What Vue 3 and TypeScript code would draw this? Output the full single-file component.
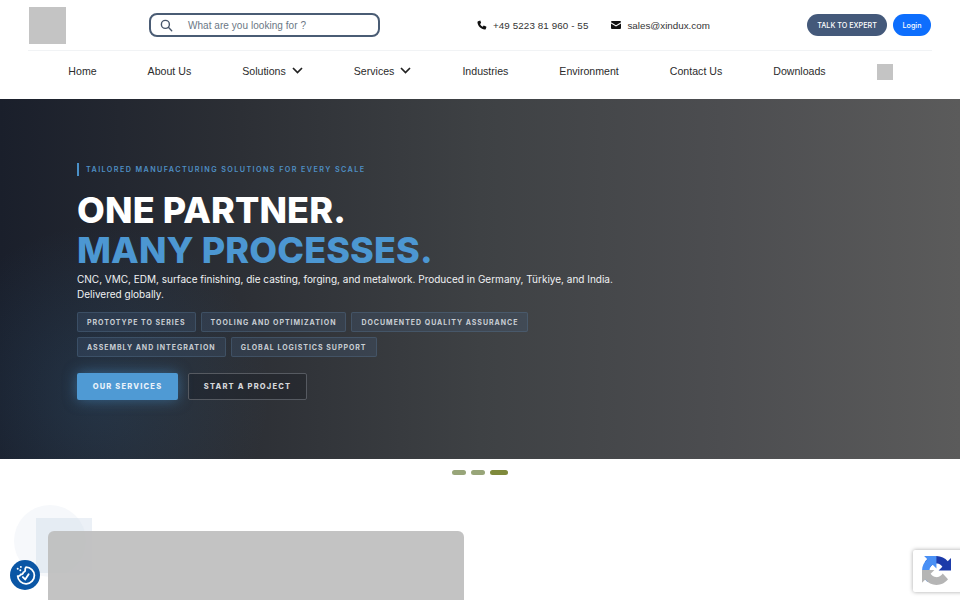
<script setup lang="ts">
interface NavItem { label: string; caret?: boolean }
const nav: NavItem[] = [
  { label: 'Home' },
  { label: 'About Us' },
  { label: 'Solutions', caret: true },
  { label: 'Services', caret: true },
  { label: 'Industries' },
  { label: 'Environment' },
  { label: 'Contact Us' },
  { label: 'Downloads' }
]
const tags: string[] = [
  'PROTOTYPE TO SERIES',
  'TOOLING AND OPTIMIZATION',
  'DOCUMENTED QUALITY ASSURANCE',
  'ASSEMBLY AND INTEGRATION',
  'GLOBAL LOGISTICS SUPPORT'
]
</script>

<template>
  <div class="page">
    <header class="header">
      <div class="top">
        <div class="logo"></div>
        <div class="search">
          <svg width="13" height="13" viewBox="0 0 14 14" fill="none" stroke="#475569" stroke-width="1.500" stroke-linecap="round">
            <circle cx="5.800" cy="5.800" r="4.300" />
            <path d="M9 9l3.600 3.600" />
          </svg>
          <span class="ph">What are you looking for ?</span>
        </div>
        <div class="contact phone">
          <svg width="10" height="10" viewBox="0 0 24 24" fill="#111">
            <path d="M6.600 1.500 2.400 3C1.600 3.400 1 4.300 1.100 5.300 2 14.500 9.500 22 18.700 22.900c1 .1 1.900-.5 2.300-1.300l1.500-4.200c.2-.7-.1-1.400-.7-1.700l-4.500-2.100c-.6-.3-1.300-.1-1.700.4l-1.700 2.100c-2.900-1.400-5.300-3.800-6.700-6.700l2.100-1.700c.5-.4.7-1.100.4-1.700L8.300 2.200c-.3-.6-1-.9-1.700-.7z" />
          </svg>
          <span>+49 5223 81 960 - 55</span>
        </div>
        <div class="contact mail">
          <svg width="10" height="8" viewBox="0 0 20 16" fill="#111">
            <path d="M2 0h16a2 2 0 0 1 2 2v.6l-10 6-10-6V2a2 2 0 0 1 2-2z" />
            <path d="M0 5l10 6 10-6v9a2 2 0 0 1-2 2H2a2 2 0 0 1-2-2z" />
          </svg>
          <span>sales@xindux.com</span>
        </div>
        <div class="actions">
          <button class="pill expert">TALK TO EXPERT</button>
          <button class="pill login">Login</button>
        </div>
      </div>
      <nav class="nav">
        <a v-for="item in nav" :key="item.label" class="nav-item">
          {{ item.label }}
          <svg v-if="item.caret" width="11" height="7" viewBox="0 0 11 7" fill="none" stroke="#222" stroke-width="1.700">
            <path d="M1 1l4.500 4.500L10 1" />
          </svg>
        </a>
        <div class="flag"></div>
      </nav>
    </header>

    <section class="hero">
      <div class="eyebrow">TAILORED MANUFACTURING SOLUTIONS FOR EVERY SCALE</div>
      <h1 class="title">ONE PARTNER.<br /><span class="accent">MANY PROCESSES.</span></h1>
      <p class="lead">CNC, VMC, EDM, surface finishing, die casting, forging, and metalwork. Produced in Germany, Türkiye, and India. Delivered globally.</p>
      <div class="tags">
        <span v-for="tag in tags" :key="tag" class="tag">{{ tag }}</span>
      </div>
      <div class="cta">
        <button class="btn primary">OUR SERVICES</button>
        <button class="btn ghost">START A PROJECT</button>
      </div>
    </section>

    <div class="dots">
      <span class="dot"></span>
      <span class="dot"></span>
      <span class="dot active"></span>
    </div>

    <section class="below">
      <div class="deco-circle"></div>
      <div class="deco-square"></div>
      <div class="image"></div>
    </section>

    <div class="cookie">
      <svg width="23" height="23" viewBox="0 0 22 22" fill="none" stroke="#fff" stroke-width="1.700" stroke-linecap="round" stroke-linejoin="round">
        <path d="M11.500 3a8 8 0 1 1-8 8.500c1.200.3 2.400-.3 2.800-1.500 1.400.2 2.500-.7 2.600-2 1.200-.3 2-1.400 1.800-2.500-.1-.9 0-1.800.8-2.500z" />
        <path d="M8.500 12.500l2.200 2.300 3.300-5" stroke-width="1.800" />
        <path d="M3.500 4.500h.1M6.500 2.800h.1M6 6h.1" stroke-width="1.800" />
      </svg>
    </div>

    <div class="recaptcha">
      <svg width="29" height="29" viewBox="0 0 64 64">
        <path d="M64 31.955l-.033-1.370V4.687l-7.160 7.160C50.948 4.674 42.033.093 32.050.093c-10.400 0-19.622 4.960-25.458 12.640l11.736 11.860c1.150-2.127 2.784-3.953 4.770-5.330 2.050-1.600 4.952-2.910 8.952-2.910.483 0 .856.057 1.130.163 4.956.39 9.252 3.125 11.782 7.090l-8.307 8.307c10.520-.04 22.400-.066 27.347.004" fill="#1c3aa9" />
        <path d="M31.965 0l-1.370.033H4.687l7.160 7.160C4.674 13.052.093 21.967.093 31.950c0 10.400 4.960 19.622 12.640 25.458l11.860-11.736c-2.127-1.150-3.953-2.784-5.330-4.770-1.600-2.050-2.910-4.952-2.910-8.952 0-.483.057-.856.163-1.130.39-4.956 3.125-9.252 7.090-11.782l8.307 8.307c-.04-10.520-.066-22.400.004-27.347" fill="#4a90f5" />
        <path d="M.002 31.965l.033 1.370v25.898l7.160-7.160c5.857 7.170 14.772 11.750 24.755 11.750 10.400 0 19.622-4.960 25.458-12.640L45.670 38.450c-1.150 2.127-2.784 3.953-4.770 5.330-2.050 1.600-4.952 2.910-8.952 2.910-.483 0-.856-.057-1.130-.163-4.956-.39-9.252-3.125-11.782-7.090l8.307-8.307c-10.520.04-22.400.066-27.347-.004" fill="#b5b5b5" />
      </svg>
    </div>
  </div>
</template>

<style>
html, body { margin: 0; padding: 0; overflow: hidden; background: #fff; }
</style>

<style scoped>
.page {
  position: relative;
  width: 960px;
  height: 600px;
  overflow: hidden;
  background: #fff;
  font-family: "Liberation Sans", Arial, sans-serif;
}
.header { height: 99px; box-sizing: border-box; padding: 0 28px; }
.top {
  height: 50px;
  display: flex;
  align-items: center;
  border-bottom: 1px solid #f1f3f5;
}
.logo { width: 37px; height: 37px; margin-left: 1px; background: #c4c4c4; flex: none; }
.search {
  width: 218px;
  height: 20px;
  margin-left: 83px;
  border: 2px solid #4a5c74;
  border-radius: 8px;
  display: flex;
  align-items: center;
  padding-left: 9px;
  flex: none;
}
.ph { margin-left: 15px; font-size: 10px; letter-spacing: 0.050px; color: #6b7785; }
.contact { display: flex; align-items: center; font-size: 9.800px; color: #333; }
.phone { margin-left: 97px; gap: 6px; }
.phone span { letter-spacing: 0.100px; }
.mail { margin-left: 23px; gap: 6px; }
.actions { margin-left: auto; margin-right: 1px; display: flex; gap: 6px; }
.pill {
  height: 22px;
  border: 0;
  border-radius: 11px;
  color: #fff;
  padding: 0;
  font-family: Inter, "Liberation Sans", sans-serif;
  font-size: 7.200px;
  font-weight: 500;
}
.expert { width: 80px; background: #44597a; }
.login { width: 38px; background: #0d6efd; }
.nav {
  height: 42px;
  display: flex;
  align-items: center;
  justify-content: center;
  gap: 51px;
  padding-left: 1px;
}
.nav-item {
  display: flex;
  align-items: center;
  gap: 6px;
  font-size: 10.600px;
  line-height: 12px;
  padding-bottom: 3px;
  color: #2b2b2b;
}
.flag { width: 16px; height: 16px; background: #c4c4c4; }
.hero {
  height: 360px;
  box-sizing: border-box;
  padding: 64px 0 0 77px;
  font-family: Inter, "Liberation Sans", sans-serif;
  background:
    radial-gradient(circle at 100px 295px, rgba(56, 130, 190, 0.16), rgba(56, 130, 190, 0) 170px),
    linear-gradient(90deg, #1a1f2b 0%, #2c2f35 25%, #3e4144 50%, #4c4d50 75%, #5b5b5b 100%);
}
.eyebrow {
  height: 13px;
  border-left: 2px solid #4a90c8;
  padding-left: 7px;
  font-size: 7.200px;
  line-height: 13px;
  letter-spacing: 1.420px;
  color: #4f8fc4;
  font-weight: 600;
}
.title {
  margin: 14px 0 0;
  font-size: 36px;
  line-height: 40px;
  font-weight: 800;
  letter-spacing: 0.120px;
  color: #fff;
}
.accent { color: #4c97d2; }
.lead {
  width: 550px;
  margin: 2px 0 0;
  font-size: 10px;
  line-height: 15px;
  font-weight: 400;
  color: #f0f2f4;
}
.tags { width: 480px; margin-top: 10px; display: flex; flex-wrap: wrap; gap: 5px; }
.tag {
  height: 20px;
  box-sizing: border-box;
  padding: 0 9px;
  display: flex;
  align-items: center;
  border: 1px solid rgba(90, 120, 150, 0.35);
  border-radius: 2px;
  background: rgba(70, 95, 125, 0.28);
  font-size: 7px;
  font-weight: 700;
  letter-spacing: 0.980px;
  color: #c9ced4;
}
.cta { margin-top: 16px; display: flex; gap: 10px; }
.btn {
  height: 27px;
  border-radius: 2px;
  font-family: Inter, "Liberation Sans", sans-serif;
  font-size: 7.500px;
  font-weight: 800;
  letter-spacing: 1.200px;
  padding: 0;
}
.primary {
  width: 101px;
  border: 0;
  background: #4f9ad4;
  color: #e8f2fa;
  box-shadow: 0 0 14px rgba(75, 151, 211, 0.5);
}
.ghost {
  width: 119px;
  border: 1px solid #565a61;
  background: rgba(20, 24, 30, 0.3);
  color: #d5d7da;
}
.dots { height: 26px; display: flex; align-items: center; justify-content: center; gap: 5px; }
.dot { width: 14px; height: 5px; border-radius: 3px; background: #98a579; }
.dot.active { width: 18px; background: #7f8a3c; }
.below { position: relative; height: 115px; }
.deco-circle {
  position: absolute;
  left: 14px;
  top: 20px;
  width: 72px;
  height: 72px;
  border-radius: 50%;
  background: #f6f8fb;
}
.deco-square {
  position: absolute;
  left: 36px;
  top: 33px;
  width: 56px;
  height: 55px;
  background: rgba(205, 217, 232, 0.4);
}
.image {
  position: absolute;
  left: 48px;
  top: 46px;
  width: 416px;
  height: 100px;
  border-radius: 6px 6px 0 0;
  background: rgba(190, 190, 190, 0.92);
}
.cookie {
  position: absolute;
  left: 10px;
  top: 560px;
  width: 30px;
  height: 30px;
  border-radius: 50%;
  background: #0a56a5;
  display: flex;
  align-items: center;
  justify-content: center;
}
.recaptcha {
  position: absolute;
  left: 913px;
  top: 550px;
  width: 60px;
  height: 42px;
  box-sizing: border-box;
  padding: 6px 0 0 9px;
  background: #fff;
  border-radius: 2px;
  box-shadow: 0 0 4px rgba(0, 0, 0, 0.35);
}
</style>
